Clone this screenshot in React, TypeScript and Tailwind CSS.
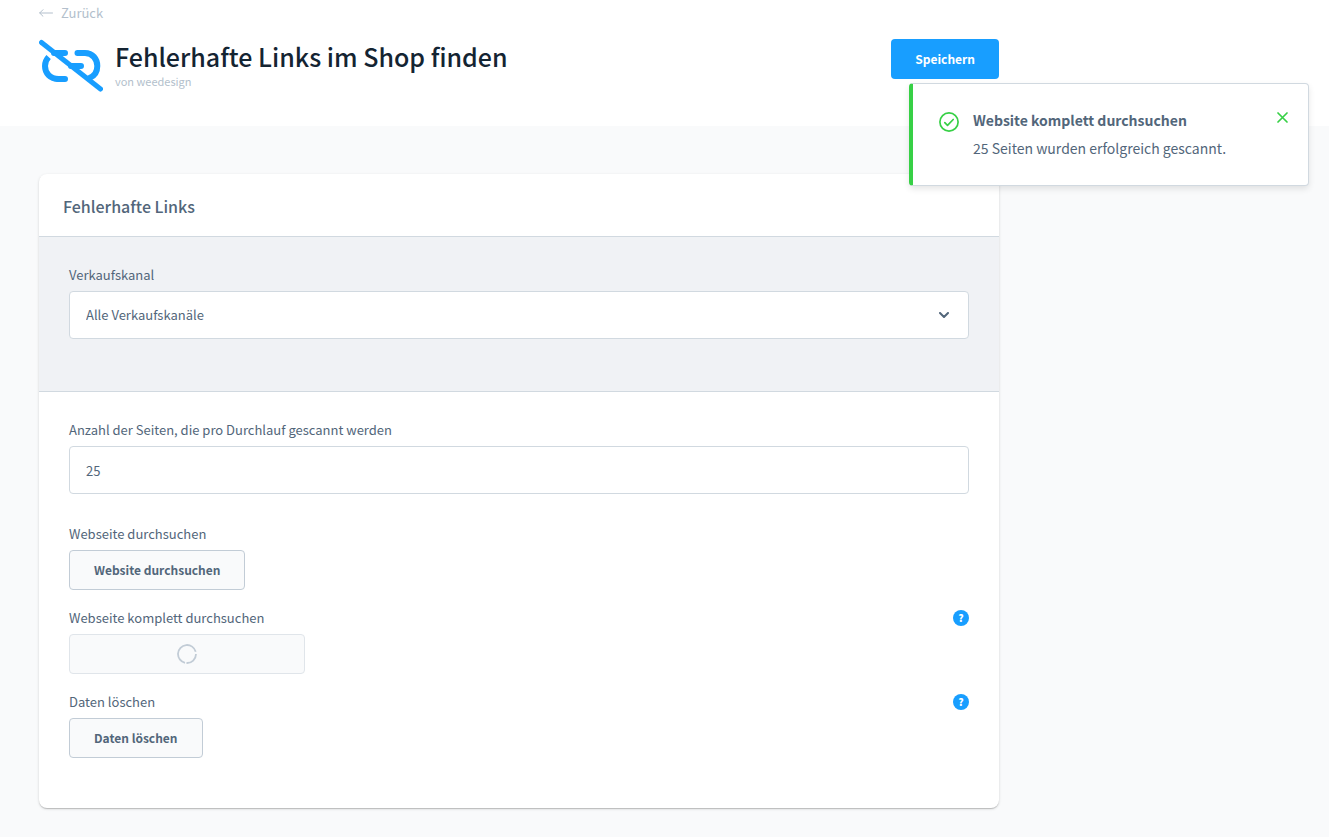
import { useState, type ReactNode } from 'react'

// ─── Constants ────────────────────────────────────────────────────────────────

const PER_RUN_DEFAULT = '25'

// ─── Icons ────────────────────────────────────────────────────────────────────

function ArrowLeftIcon() {
  return (
    <svg width="14" height="8" viewBox="0 0 14 8" fill="none" stroke="currentColor" strokeLinecap="round" strokeLinejoin="round">
      <path d="M13.5 4H.7M4 .7.7 4 4 7.3" />
    </svg>
  )
}

function BrokenLinkIcon() {
  return (
    <svg width="64" height="53" viewBox="0 0 64 53" fill="none" stroke="#189eff" strokeWidth="6" strokeLinecap="round" className="shrink-0">
      <path d="M15 14h11M19 40h7" />
      <path d="M19.500 40C11 40 6 34 6 27c0-3.200 1.200-6.500 3.600-9" strokeLinecap="butt" />
      <path d="M38.500 14h7.500c7.500 0 12.300 6 12.300 13 0 6-3 10-7.800 12M32 27h10" />
      <path d="M2.500 3.500 61.500 50" strokeWidth="5" />
    </svg>
  )
}

function CheckCircleIcon() {
  return (
    <svg width="20" height="20" viewBox="0 0 20 20" fill="none" stroke="currentColor" strokeWidth="1.700" strokeLinecap="round" strokeLinejoin="round">
      <circle cx="10" cy="10" r="9.100" />
      <path d="m5.800 10.600 2.700 2.700 5.700-5.800" />
    </svg>
  )
}

function CloseIcon() {
  return (
    <svg width="11" height="11" viewBox="0 0 11 11" fill="none" stroke="currentColor" strokeWidth="1.700" strokeLinecap="round">
      <path d="m1 1 9 9M10 1l-9 9" />
    </svg>
  )
}

function ChevronDownIcon() {
  return (
    <svg width="10" height="6" viewBox="0 0 10 6" fill="none" stroke="#52667a" strokeWidth="2" strokeLinecap="round" strokeLinejoin="round">
      <path d="m1 1 4 4 4-4" />
    </svg>
  )
}

function LoaderIcon() {
  return (
    <svg width="20" height="20" viewBox="0 0 20 20" fill="none" stroke="#c2ccd6" strokeWidth="1.800">
      <path d="M19 10a9 9 0 0 1-9.500 9M8 18.800A9 9 0 1 1 18.700 7.700" />
    </svg>
  )
}

// ─── Form parts ───────────────────────────────────────────────────────────────

const LABEL = 'text-[13px] leading-4 text-[#52667a]'
const BUTTON = 'h-10 rounded border border-[#c2ccd6] bg-[#f9fafb] px-6 text-[12px] font-bold text-[#52667a]'

function HelpButton({ label }: { label: string }) {
  return (
    <button
      type="button"
      aria-label={label}
      className="flex size-4 items-center justify-center rounded-full bg-[#189eff] text-[10px] font-black leading-4 text-white"
    >
      ?
    </button>
  )
}

function ActionField({ id, label, help, children }: { id: string; label: string; help?: boolean; children: ReactNode }) {
  return (
    <div className="mb-5">
      <div className="mb-2 flex items-center justify-between">
        <span id={id} className={LABEL}>
          {label}
        </span>
        {help && <HelpButton label={label} />}
      </div>
      {children}
    </div>
  )
}

// ─── Notification ─────────────────────────────────────────────────────────────

function Notification({ title, message, onClose }: { title: string; message: string; onClose: () => void }) {
  return (
    <div
      role="status"
      className="absolute top-[83px] right-5 flex w-[400px] items-start rounded border border-l-4 border-[#d1d9e0] border-l-[#37d046] bg-white pt-6 pr-5 pb-[25px] pl-[26px] shadow-[0_3px_6px_0_rgba(0,0,0,0.1)]"
    >
      <span className="mt-1 mr-[14px] text-[#37d046]">
        <CheckCircleIcon />
      </span>
      <div className="flex-1 text-[14px] text-[#52667a]">
        <h2 className="font-bold leading-6">{title}</h2>
        <p className="mt-1 leading-6">{message}</p>
      </div>
      <button type="button" aria-label="Schließen" onClick={onClose} className="mt-1 text-[#37d046]">
        <CloseIcon />
      </button>
    </div>
  )
}

// ─── Page ─────────────────────────────────────────────────────────────────────

export default function App() {
  const [perRun, setPerRun] = useState(PER_RUN_DEFAULT)
  const [showNotification, setShowNotification] = useState(true)

  return (
    <div className="relative min-h-screen bg-[#f9fafb] font-['Noto_Sans_CJK_SC','Source_Sans_Pro',sans-serif] text-[#52667a]">
      <header className="bg-white px-[39px] pt-[3px] pb-[34px]">
        <div className="max-w-[960px]">
          <a href="#" className="flex h-5 w-fit items-center gap-2 text-[13px] text-[#b3bfcc]">
            <ArrowLeftIcon />
            Zurück
          </a>
          <div className="mt-4 flex items-start">
            <BrokenLinkIcon />
            <div className="ml-3 flex-1">
              <h1 className="text-[25px] font-medium leading-[34px] text-[#142432]">Fehlerhafte Links im Shop finden</h1>
              <p className="text-[11px] leading-4 text-[#b3bfcc]">von weedesign</p>
            </div>
            <button type="button" className="h-10 rounded bg-[#189eff] px-6 text-[12px] font-bold text-white">
              Speichern
            </button>
          </div>
        </div>
      </header>

      <main className="px-[39px] pt-12 pb-7">
        <section className="max-w-[960px] overflow-hidden rounded-lg bg-white shadow-[0_1px_1px_rgba(0,0,0,0.1),0_2px_1px_-1px_rgba(0,0,0,0.08),0_1px_3px_rgba(0,0,0,0.14)]">
          <h2 className="px-6 pt-[21px] pb-[19px] text-[16px] font-medium leading-[22px] text-[#52667a]">Fehlerhafte Links</h2>

          <div className="border-y border-[#d1d9e0] bg-[#f0f2f5] px-[30px] pt-[30px] pb-[52px]">
            <label htmlFor="channel" className={`block ${LABEL}`}>
              Verkaufskanal
            </label>
            <div className="relative mt-2">
              <select
                id="channel"
                className="h-12 w-full appearance-none rounded border border-[#d1d9e0] bg-white px-4 text-[13px] text-[#52667a]"
              >
                <option>Alle Verkaufskanäle</option>
              </select>
              <span className="pointer-events-none absolute inset-y-0 right-5 flex items-center">
                <ChevronDownIcon />
              </span>
            </div>
          </div>

          <div className="p-[30px]">
            <div className="mb-8">
              <label htmlFor="per-run" className={`block ${LABEL}`}>
                Anzahl der Seiten, die pro Durchlauf gescannt werden
              </label>
              <input
                id="per-run"
                type="text"
                value={perRun}
                onChange={e => setPerRun(e.target.value)}
                className="mt-2 h-12 w-full rounded border border-[#d1d9e0] bg-white px-4 text-[13px] text-[#52667a]"
              />
            </div>

            <ActionField id="scan" label="Webseite durchsuchen">
              <button type="button" aria-describedby="scan" className={BUTTON}>
                Website durchsuchen
              </button>
            </ActionField>

            <ActionField id="scan-all" label="Webseite komplett durchsuchen" help>
              <button
                type="button"
                disabled
                aria-labelledby="scan-all"
                className="flex h-10 w-[236px] items-center justify-center rounded border border-[#e0e5ea] bg-[#f9fafb]"
              >
                <LoaderIcon />
              </button>
            </ActionField>

            <ActionField id="clear" label="Daten löschen" help>
              <button type="button" aria-describedby="clear" className={BUTTON}>
                Daten löschen
              </button>
            </ActionField>
          </div>
        </section>
      </main>

      {showNotification && (
        <Notification
          title="Website komplett durchsuchen"
          message="25 Seiten wurden erfolgreich gescannt."
          onClose={() => setShowNotification(false)}
        />
      )}
    </div>
  )
}
